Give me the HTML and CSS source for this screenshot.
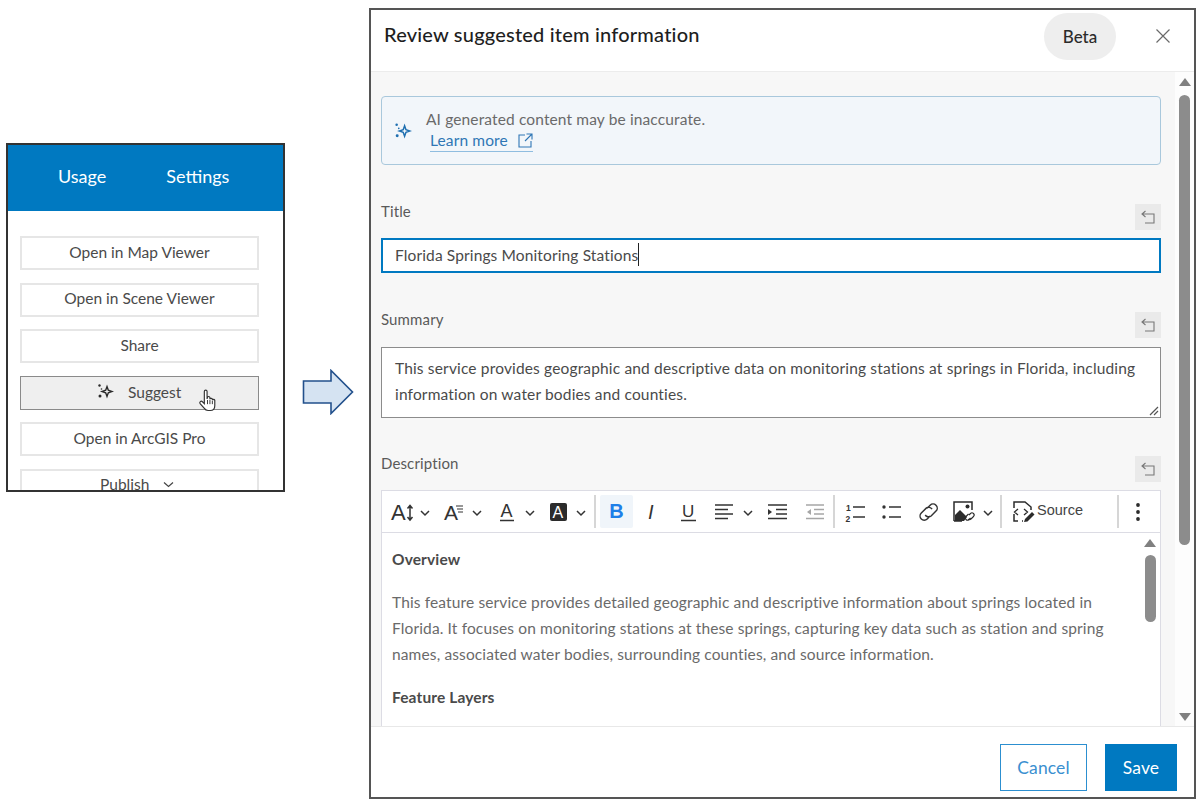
FILE: index.html
```html
<!DOCTYPE html>
<html lang="en">
<head>
<meta charset="utf-8">
<title>Review suggested item information</title>
<link rel="stylesheet" href="styles.css">
</head>
<body>
<section class="item-panel">
  <nav class="tabs"><span class="tab">Usage</span><span class="tab">Settings</span></nav>
  <div class="actions">
    <div class="action">Open in Map Viewer</div>
    <div class="action">Open in Scene Viewer</div>
    <div class="action">Share</div>
    <div class="action action-hover">
      <svg class="spark-dark" width="17" height="17" viewBox="0 0 17 17"><path d="M10 3.5 11.3 7.2 15 8.5 11.3 9.8 10 13.5 8.7 9.8 5 8.5 8.7 7.2Z" fill="none" stroke="#2b2b2b" stroke-width="1.4"/><circle cx="2.5" cy="2.5" r="1.2" fill="#2b2b2b"/><circle cx="4.5" cy="6" r=".8" fill="#2b2b2b"/><circle cx="3" cy="13" r="1.5" fill="#2b2b2b"/></svg>
      <span>Suggest</span>
      <svg class="hand" width="18" height="24" viewBox="0 0 18 24"><path d="M6 13V3a1.3 1.3 0 0 1 2.6 0v7l.4-1.5a1.2 1.2 0 0 1 2.3.2v1.6a1.2 1.2 0 0 1 2.3 0v1a1.2 1.2 0 0 1 2.3 0v5.2c0 2.6-1.600 4.500-4.300 4.500H9.500c-1.800 0-2.800-.8-3.700-2.200L2 14.500c-1-1.600.8-3 2.200-1.800L6 14.500Z" fill="#fff" stroke="#333" stroke-width="1.100"/><path d="M9 11v4M11.300 11v4M13.600 12v3" stroke="#333" stroke-width=".9" fill="none"/></svg>
    </div>
    <div class="action">Open in ArcGIS Pro</div>
    <div class="action action-publish"><span>Publish</span><svg width="11" height="7" viewBox="0 0 11 7"><path d="M1 1.500 5.500 5.500 10 1.500" fill="none" stroke="#444" stroke-width="1.200"/></svg></div>
  </div>
</section>

<svg class="flow-arrow" width="52" height="46" viewBox="0 0 52 46"><path d="M1.500 12H29V1.500L50.500 23 29 44.500V34H1.500Z" fill="#d5e3f2" stroke="#22508c" stroke-width="1.600"/></svg>

<section class="dialog">
  <header class="dialog-head">
    <h1 class="dialog-title">Review suggested item information</h1>
    <span class="beta">Beta</span>
    <svg class="close" width="16" height="16" viewBox="0 0 16 16"><path d="M1.500 1.500 14.500 14.500M14.500 1.500 1.500 14.500" stroke="#6a6a6a" stroke-width="1.200" fill="none"/></svg>
  </header>

  <div class="dialog-body">
    <div class="form">
      <div class="notice">
        <svg width="18" height="18" viewBox="0 0 17 17"><path d="M10 3.500 11.300 7.200 15 8.500 11.300 9.800 10 13.500 8.700 9.800 5 8.500 8.700 7.200Z" fill="none" stroke="#1f6fb0" stroke-width="1.400"/><circle cx="2.500" cy="2.500" r="1.200" fill="#1f6fb0"/><circle cx="4.500" cy="6" r=".8" fill="#1f6fb0"/><circle cx="3" cy="13" r="1.400" fill="#1f6fb0"/></svg>
        <div class="notice-text">
          <div>AI generated content may be inaccurate.</div>
          <a class="learn">Learn more<svg width="15" height="15" viewBox="0 0 15 15"><path d="M7 2H1v12h12V8M8.500 1H14v5.500M14 1 7 8" fill="none" stroke="#2f76b5" stroke-width="1.100"/></svg></a>
        </div>
      </div>

      <div class="label-row"><label class="label">Title</label><span class="undo"><svg width="15" height="14" viewBox="0 0 15 14"><path d="M4.500 1 1 4l3.500 3M1 4h12v9H4" fill="none" stroke="#777" stroke-width="1.100"/></svg></span></div>
      <div class="input">Florida Springs Monitoring Stations<span class="caret"></span></div>

      <div class="label-row"><label class="label">Summary</label><span class="undo"><svg width="15" height="14" viewBox="0 0 15 14"><path d="M4.500 1 1 4l3.500 3M1 4h12v9H4" fill="none" stroke="#777" stroke-width="1.100"/></svg></span></div>
      <div class="textarea">This service provides geographic and descriptive data on monitoring stations at springs in Florida, including information on water bodies and counties.<svg class="grip" width="10" height="10" viewBox="0 0 10 10"><path d="M9 1 1 9M9 5 5 9" stroke="#555" stroke-width="1.200" fill="none"/></svg></div>

      <div class="label-row label-row-tight"><label class="label">Description</label><span class="undo"><svg width="15" height="14" viewBox="0 0 15 14"><path d="M4.500 1 1 4l3.500 3M1 4h12v9H4" fill="none" stroke="#777" stroke-width="1.100"/></svg></span></div>
      <div class="editor">
        <div class="toolbar">
          <svg width="44" height="41" viewBox="0 0 44 41"><text class="ti" x="1" y="29" font-size="22">A</text><path d="M20 15v14M17.500 17.500 20 14.500l2.500 3M17.500 26 20 29l2.500-3" fill="none" stroke="#333" stroke-width="1.500"/><path d="M31 20l4 4 4-4" class="chev"/></svg>
          <svg width="54" height="41" viewBox="0 0 54 41"><text class="ti" x="10" y="29" font-size="21">A</text><path d="M22 15h7M23 18h6M24 21h5" stroke="#333" stroke-width="1.200"/><path d="M39 20l4 4 4-4" class="chev"/></svg>
          <svg width="54" height="41" viewBox="0 0 54 41"><text class="ti" x="12.500" y="26" font-size="18">A</text><path d="M12 29.500h14" stroke="#333" stroke-width="1.500"/><path d="M38 20l4 4 4-4" class="chev"/></svg>
          <svg width="50" height="41" viewBox="0 0 50 41"><rect x="8" y="12" width="17" height="18" rx="2" fill="#2b2b2b"/><text class="ti-w" x="10.500" y="27" font-size="16">A</text><path d="M35 20l4 4 4-4" class="chev"/></svg>
          <span class="sep"></span>
          <span class="bold-btn">B</span>
          <svg width="38" height="41" viewBox="0 0 38 41"><text class="ti-i" x="15" y="28" font-size="20">I</text></svg>
          <svg width="40" height="41" viewBox="0 0 40 41"><text class="ti" x="11" y="26" font-size="17">U</text><path d="M10 29.500h15" stroke="#333" stroke-width="1.500"/></svg>
          <svg width="55" height="41" viewBox="0 0 55 41"><path d="M4 14h18M4 18.500h13M4 23h18M4 27.500h13" stroke="#333" stroke-width="1.500"/><path d="M33 20l4 4 4-4" class="chev"/></svg>
          <svg width="38" height="41" viewBox="0 0 38 41"><path d="M2 14h19M10 18.500h11M10 23h11M2 27.500h19" stroke="#333" stroke-width="1.500"/><path d="M2 18l4 3-4 3Z" fill="#333"/></svg>
          <svg width="27" height="41" viewBox="0 0 27 41"><path d="M2 14h18M10 18.500h10M10 23h10M2 27.500h18" stroke="#a6a6a6" stroke-width="1.500"/><path d="M7 18l-4 3 4 3Z" fill="#a6a6a6"/></svg>
          <span class="sep"></span>
          <svg width="38" height="41" viewBox="0 0 38 41"><text class="ti-b" x="9" y="19.500" font-size="8.500">1</text><text class="ti-b" x="8.500" y="30.500" font-size="8.500">2</text><path d="M16 16h12M16 26h12" stroke="#333" stroke-width="1.500"/></svg>
          <svg width="36" height="41" viewBox="0 0 36 41"><circle cx="9" cy="16" r="1.700" fill="#333"/><circle cx="9" cy="26" r="1.700" fill="#333"/><path d="M14 16h12M14 26h12" stroke="#333" stroke-width="1.500"/></svg>
          <svg width="36" height="41" viewBox="0 0 36 41"><path d="M16 17l3-3a4.200 4.200 0 0 1 6 6l-5 5a4.200 4.200 0 0 1-6-1M19 25l-3 3a4.200 4.200 0 0 1-6-6l5-5a4.200 4.200 0 0 1 6 1" fill="none" stroke="#333" stroke-width="1.500" transform="translate(0.500 0.500) scale(.98)"/></svg>
          <svg width="51" height="41" viewBox="0 0 51 41"><g transform="translate(-3 0)"><path d="M10 30V11h18v8M10 30h8" fill="none" stroke="#2b2b2b" stroke-width="1.500"/><path d="M11 30v-6l5-5 4 4 3 3-3 4Z" fill="#2b2b2b"/><circle cx="23.500" cy="15.500" r="2" fill="#2b2b2b"/><path d="M25 24l1.500-1.500a2 2 0 0 1 3 3L27 28a2 2 0 0 1-3 0M26.500 27l-1.500 1.500a2 2 0 0 1-3-3l2.500-2.500" fill="none" stroke="#2b2b2b" stroke-width="1.100"/></g><path d="M37 20l4 4 4-4" class="chev"/></svg>
          <span class="sep"></span>
          <svg class="src-icon" width="24" height="26" viewBox="0 0 24 26"><path d="M2 9V3h11l6 5v3M2 15v7h4M10 22h1" fill="none" stroke="#2b2b2b" stroke-width="1.500"/><path d="M6 10l-3.500 3 3.500 3M12 10l3.500 3-3.500 3" fill="none" stroke="#2b2b2b" stroke-width="1.300"/><path d="M12 23l1-3 7-7 2.500 2.500-7 7Z" fill="#2b2b2b"/></svg>
          <span class="src-label">Source</span>
          <span class="sep sep-end"></span>
          <svg width="6" height="20" viewBox="0 0 6 20" class="dots"><circle cx="3" cy="3" r="1.900" fill="#2b2b2b"/><circle cx="3" cy="10" r="1.900" fill="#2b2b2b"/><circle cx="3" cy="17" r="1.900" fill="#2b2b2b"/></svg>
        </div>
        <div class="editor-body">
          <p class="doc-head">Overview</p>
          <p class="doc-text">This feature service provides detailed geographic and descriptive information about springs located in Florida. It focuses on monitoring stations at these springs, capturing key data such as station and spring names, associated water bodies, surrounding counties, and source information.</p>
          <p class="doc-head doc-head-2">Feature Layers</p>
          <div class="mini-scroll"><i class="arrow-up"></i><i class="thumb mini-thumb"></i></div>
        </div>
      </div>
    </div>
    <div class="track"><i class="arrow-up"></i><i class="thumb main-thumb"></i><i class="arrow-down"></i></div>
  </div>

  <footer class="dialog-foot">
    <span class="btn btn-cancel">Cancel</span>
    <span class="btn btn-save">Save</span>
  </footer>
</section>
</body>
</html>
```
FILE: styles.css
```css
* { box-sizing: border-box; }
html, body { margin: 0; height: 802px; overflow: hidden; }
body {
  display: flex;
  align-items: flex-start;
  background: #fff;
  font-family: Lato, "Open Sans", sans-serif;
  color: #4a4a4a;
  font-size: 15px;
}

/* left panel */
.item-panel {
  width: 279px;
  height: 349px;
  margin: 143px 0 0 6px;
  border: 2px solid #333;
  overflow: hidden;
  flex: none;
}
.tabs {
  height: 66px;
  background: #0079c1;
  color: #fff;
  display: flex;
  align-items: center;
  font-size: 18px;
  padding: 0 0 4px 50px;
  gap: 60px;
}
.actions {
  display: flex;
  flex-direction: column;
  gap: 12.6px;
  padding: 25px 0 0 12px;
}
.action {
  width: 239px;
  height: 34px;
  flex: none;
  border: 2px solid #e6e6e6;
  display: flex;
  align-items: center;
  justify-content: center;
  font-size: 15.500px;
  color: #4a4a4a;
  background: #fff;
  padding-bottom: 3px;
}
.action-hover {
  background: #efefef;
  border: 1px solid #8a8a8a;
  justify-content: flex-start;
  padding-left: 76px;
  padding-bottom: 2px;
  position: relative;
}
.spark-dark { margin-right: 14px; }
.hand { position: absolute; left: 177px; top: 11px; width: 19px; height: 26px; }
.action-publish { gap: 14px; padding-top: 0; justify-content: flex-start; padding-left: 78px; }

.flow-arrow { flex: none; margin: 369px 0 0 17px; }

/* dialog */
.dialog {
  flex: none;
  width: 827px;
  height: 791px;
  margin: 8px 0 0 15px;
  border: 2px solid #555;
  display: flex;
  flex-direction: column;
  background: #fff;
}
.dialog-head {
  height: 62px;
  flex: none;
  border-bottom: 1px solid #ececec;
  display: flex;
  align-items: center;
  padding: 0 23px 0 13px;
}
.dialog-title {
  margin: 0 auto 13px 0;
  font-size: 20px;
  font-weight: 500;
  letter-spacing: .2px;
  color: #1e1e1e;
}
.beta {
  width: 72px;
  height: 47px;
  margin: 0 39px 8px 0;
  border-radius: 24px;
  background: #eeeeee;
  color: #2b2b2b;
  font-size: 17px;
  font-weight: 500;
  display: flex;
  align-items: center;
  justify-content: center;
}
.close { flex: none; margin-bottom: 9px; }

.dialog-body { flex: 1; min-height: 0; display: flex; background: #f7f7f7; overflow: hidden; }
.form { flex: 1; min-width: 0; padding: 24px 14px 0 10px; display: flex; flex-direction: column; letter-spacing: .13px; }

.notice {
  height: 69px;
  flex: none;
  border: 1.500px solid #a9c8dc;
  border-radius: 4px;
  background: #f2f6fa;
  display: flex;
  align-items: center;
  padding: 0 0 0 12px;
  gap: 14px;
}
.notice-text { color: #6a6a6a; font-size: 15.500px; line-height: 21px; }
.learn {
  display: inline-flex;
  align-items: center;
  gap: 10px;
  margin-left: 4px;
  color: #2f76b5;
  border-bottom: 1px solid #8fbde0;
}

.label-row {
  height: 26px;
  flex: none;
  margin: 39px 0 8px;
  display: flex;
  justify-content: space-between;
}
.label-row-tight { margin-top: 38px; }
.label { color: #5a5a5a; font-size: 15px; line-height: 15px; }
.undo {
  width: 26px;
  height: 26px;
  background: #eaeaea;
  display: flex;
  align-items: center;
  justify-content: center;
}

.input {
  height: 35px;
  flex: none;
  border: 2px solid #0079c1;
  background: #fff;
  padding: 0 0 2px 12px;
  display: flex;
  align-items: center;
  font-size: 15.500px;
}
.caret { width: 1px; height: 23px; background: #222; }

.textarea {
  height: 71px;
  flex: none;
  margin-top: 1px;
  border: 1px solid #8c8c8c;
  background: #fff;
  padding: 7px 13px;
  font-size: 15.500px;
  line-height: 26px;
  letter-spacing: .16px;
  position: relative;
}
.grip { position: absolute; right: 1px; bottom: 1px; }

.editor {
  flex: 1;
  min-height: 0;
  border: 1px solid #dcdce4;
  border-bottom: 0;
  background: #fff;
  display: flex;
  flex-direction: column;
}
.toolbar {
  height: 42px;
  flex: none;
  border-bottom: 1px solid #dcdce4;
  display: flex;
  align-items: center;
  padding-left: 8px;
  letter-spacing: 0;
}
.toolbar > svg { flex: none; }
.ti, .ti-w, .ti-i, .ti-b { font-family: "Liberation Sans", sans-serif; }
.ti { fill: #333; }
.ti-w { fill: #fff; }
.ti-i { fill: #333; font-style: italic; }
.ti-b { fill: #333; font-weight: 700; }
.chev { fill: none; stroke: #333; stroke-width: 1.500; }
.sep { width: 2px; height: 33px; background: #d6d6d6; flex: none; margin: 0 2px; }
.sep-end { margin: 0 16px 0 34px; }
.bold-btn {
  width: 33px;
  height: 33px;
  flex: none;
  margin-left: 2px;
  background: #f0f5fa;
  border-radius: 2px;
  color: #1f7fe8;
  font: 700 20px "Liberation Sans", sans-serif;
  display: flex;
  align-items: center;
  justify-content: center;
}
.src-icon { margin-left: 8px; }
.src-label { font: 14.500px "Liberation Sans", sans-serif; color: #444; margin: -3px 0 0 1px; }

.editor-body { flex: 1; min-height: 0; position: relative; padding: 16px 50px 0 10px; overflow: hidden; }
.editor-body p { margin: 0; }
.doc-head { font-weight: 700; font-size: 15.500px; line-height: 20px; color: #4a4a4a; }
.doc-head-2 { margin-top: 20px !important; }
.doc-text { font-size: 15.500px; line-height: 26px; color: #6a6a6a; margin-top: 20px !important; }

.mini-scroll {
  position: absolute;
  right: 4px;
  top: 6px;
  width: 12px;
  display: flex;
  flex-direction: column;
  align-items: center;
  gap: 8px;
}
.mini-thumb { height: 67px; }

.track {
  width: 19px;
  flex: none;
  background: #fdfdfd;
  display: flex;
  flex-direction: column;
  align-items: center;
  padding: 6px 0 5px;
}
.thumb { display: block; width: 11px; border-radius: 6px; background: #8c8c8c; }
.main-thumb { height: 450px; margin-top: 9px; }
.arrow-up, .arrow-down { display: block; width: 0; height: 0; border-left: 6px solid transparent; border-right: 6px solid transparent; }
.arrow-up { border-bottom: 8px solid #808080; }
.arrow-down { border-top: 8px solid #808080; margin-top: auto; }

.dialog-foot {
  height: 71px;
  flex: none;
  border-top: 1px solid #e8e8e8;
  display: flex;
  justify-content: flex-end;
  gap: 18px;
  padding: 17px 17px 0 0;
}
.btn {
  height: 47px;
  display: flex;
  align-items: center;
  justify-content: center;
  font-size: 17.500px;
  letter-spacing: .1px;
}
.btn-cancel { width: 87px; border: 1.500px solid #2c8fd0; color: #3a8fd0; }
.btn-save { width: 72px; background: #0079c1; color: #fff; }
```
